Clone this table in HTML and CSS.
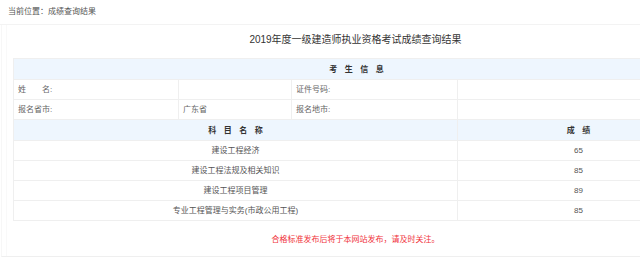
FILE: index.html
```
<!DOCTYPE html>
<html lang="zh-CN">
<head>
<meta charset="utf-8">
<title>成绩查询结果</title>
<link rel="stylesheet" href="styles.css">
</head>
<body>
<div class="page">
  <div class="crumb">当前位置：成绩查询结果</div>
  <div class="panel">
    <h1 class="title">2019年度一级建造师执业资格考试成绩查询结果</h1>
    <table class="result">
      <colgroup>
        <col class="c1"><col class="c2"><col class="c3"><col class="c4">
      </colgroup>
      <tr class="head"><th colspan="4">考生信息</th></tr>
      <tr>
        <td class="label">姓　　名:</td><td></td>
        <td class="label">证件号码:</td><td></td>
      </tr>
      <tr>
        <td class="label">报名省市:</td><td class="label">广东省</td>
        <td class="label">报名地市:</td><td></td>
      </tr>
      <tr class="head sub"><th colspan="3">科目名称</th><th>成绩</th></tr>
      <tr><td colspan="3" class="center">建设工程经济</td><td class="center">65</td></tr>
      <tr><td colspan="3" class="center">建设工程法规及相关知识</td><td class="center">85</td></tr>
      <tr><td colspan="3" class="center">建设工程项目管理</td><td class="center">89</td></tr>
      <tr><td colspan="3" class="center">专业工程管理与实务(市政公用工程)</td><td class="center">85</td></tr>
    </table>
    <p class="note">合格标准发布后将于本网站发布，请及时关注。</p>
  </div>
</div>
</body>
</html>
```

FILE: styles.css
```
html, body {
  margin: 0;
  padding: 0;
  background: #fff;
  overflow: hidden;
}
body {
  font-family: "Liberation Sans", "Noto Sans CJK SC", sans-serif;
  font-size: 8px;
  color: #555;
}
.page {
  width: 710px;
}
.crumb {
  height: 24px;
  line-height: 24px;
  padding-left: 8px;
  color: #555;
  border-bottom: 1px solid #f3f3f3;
}
.panel {
  height: 231px;
  margin-left: 1px;
  padding: 0 12px 0 11px;
  border-left: 1px solid #f7f7f7;
  border-bottom: 1px solid #efefef;
  box-shadow: inset 4px 0 0 #fff, inset 5px 0 0 #f9f9f9;
}
.title {
  margin: 0;
  padding-top: 9px;
  height: 24px;
  line-height: 12px;
  font-size: 10px;
  font-weight: normal;
  color: #333;
  text-align: center;
}
.result {
  width: 686px;
  border-collapse: collapse;
  table-layout: fixed;
  border: 1px solid #f0f0f0;
}
.c1 { width: 165px; }
.c2 { width: 113px; }
.c3 { width: 166px; }
.c4 { width: 242px; }
.result td, .result th {
  height: 19px;
  padding: 0 4px;
  border: 1px solid #efefef;
  line-height: 19px;
  white-space: nowrap;
}
.result .head th {
  background: #eef6fe;
  color: #333;
  font-weight: bold;
  letter-spacing: 7.5px;
  text-indent: 7.5px;
  text-align: center;
  height: 20px;
}
.label {
  color: #666;
  text-align: left;
}
.center {
  text-align: center;
  color: #555;
}
.note {
  margin: 13px 0 0;
  color: #f0323a;
  text-align: center;
  line-height: 12px;
}
```
